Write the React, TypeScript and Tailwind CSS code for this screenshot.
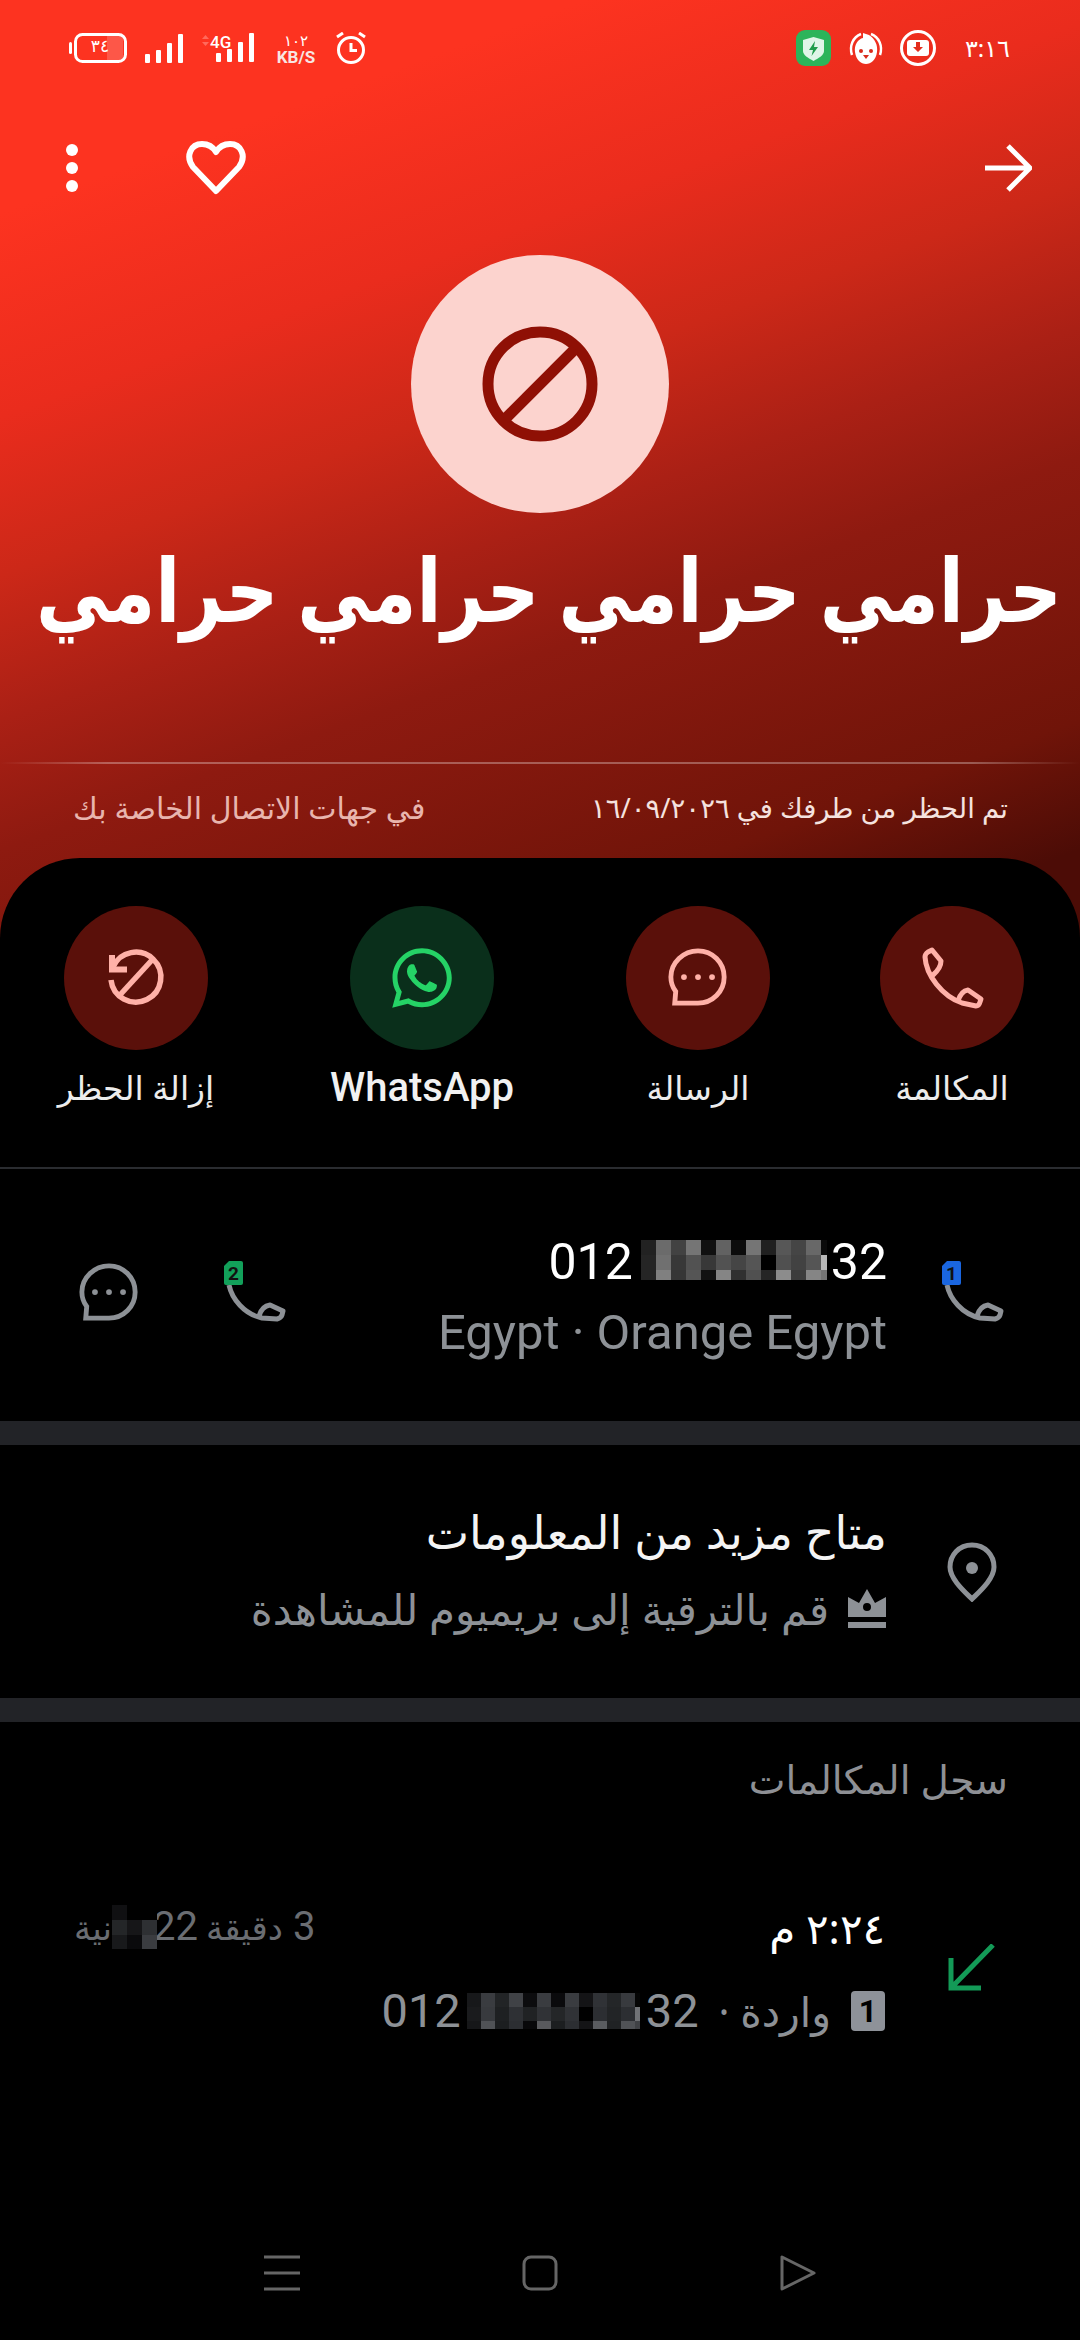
import { FaWhatsapp } from "react-icons/fa6";

const AR = "font-['Noto_Sans','DejaVu_Sans',sans-serif]";
const RB = "font-['Roboto',sans-serif]";

const numberCells = [
  ["#222", "#6b6b6b", "#424242", "#757575", "#101010", "#626262", "#0c0c0c", "#757575", "#202020", "#575757", "#454545", "#686868", "#0a0a0a"],
  ["#252525", "#707070", "#383838", "#525252", "#383838", "#525252", "#454545", "#555", "#000", "#505050", "#424242", "#555", "#b8b8b8"],
  ["#252525", "#808080", "#363636", "#555", "#121212", "#858585", "#303030", "#505050", "#252525", "#8c8c8c", "#3c3c3c", "#858585", "#757575"],
];

const logCells = [
  ["#17181a", "#3a3c40", "#222426", "#404246", "#0c0c0e", "#3a3c40", "#0a0a0c", "#3a3c40", "#141416", "#303236", "#242628", "#383a3e", "#050505"],
  ["#1a1b1d", "#383a3e", "#1e2022", "#2e3034", "#202224", "#303236", "#242628", "#303236", "#000", "#2c2e32", "#222426", "#2c2e32", "#707276"],
  ["#161719", "#505256", "#1c1e20", "#2c2e32", "#08080a", "#58595d", "#1c1e20", "#2c2e32", "#141416", "#5a5c60", "#202224", "#505256", "#404246"],
];

const durationCells = [
  ["#101012", "#000", "#000"],
  ["#242628", "#161618", "#2e3033"],
  ["#18191b", "#0a0a0c", "#3a3c40"],
];

// pixelated part of a blurred number, last column is narrower
const Mosaic = ({ cells, size, lastW, lastH, className = "" }: { cells: string[][]; size: number; lastW: number; lastH: number; className?: string }) => (
  <span dir="ltr" className={`inline-flex flex-col align-middle ${className}`}>
    {cells.map((row, r) => (
      <span key={r} className="flex">
        {row.map((c, i) => (
          <span
            key={i}
            style={{
              background: c,
              width: i === row.length - 1 ? lastW : size,
              height: r === cells.length - 1 ? lastH : size,
            }}
          />
        ))}
      </span>
    ))}
  </span>
);

const Phone = ({ className = "" }: { className?: string }) => (
  <svg viewBox="2 -2 100 100" className={className} fill="none" stroke="currentColor" strokeWidth="5" strokeLinejoin="round" strokeLinecap="round">
    <path d="M25 27C26 45 42 66 62 73L76 76Q79 76 80 72L81 69L68 60Q61 61 58 71M25 27Q25 24 28 22L32 20L41 31Q41 38 33 45" />
  </svg>
);

const SimPhone = ({ sim, color }: { sim: string; color: string }) => (
  <svg viewBox="20 20 64 64" className="h-[64px] w-[64px] text-[#8d9196]" fill="none" stroke="currentColor" strokeWidth="5" strokeLinejoin="round">
    <path d="M27 46C30 60 42 75 60 79L75 80Q79 79 80 76L81 72L68 66Q60 67 57 77" />
    <path d="M27 22H39Q41 22 41 24V44Q41 46 39 46H24Q22 46 22 44V27z" fill={color} stroke="none" />
    <text x="31.5" y="41" textAnchor="middle" fontSize="19" fontWeight="700" fontFamily="Roboto" fill="#111" stroke="none">{sim}</text>
  </svg>
);

const Chat = ({ className = "" }: { className?: string }) => (
  <svg viewBox="0 0 64 64" className={className} fill="none" stroke="currentColor" strokeWidth="5">
    <path d="M32 4C47 4 59 16 59 31C59 46 47 58 32 58H8L9 46C6 42 4 37 4 31C4 16 17 4 32 4z" />
    <circle cx="17.5" cy="31" r="3" fill="currentColor" stroke="none" />
    <circle cx="32" cy="31" r="3" fill="currentColor" stroke="none" />
    <circle cx="46.5" cy="31" r="3" fill="currentColor" stroke="none" />
  </svg>
);

const Unblock = ({ className = "" }: { className?: string }) => (
  <svg viewBox="6 -2 100 100" className={className} fill="none" stroke="currentColor" strokeWidth="5.5">
    <path d="M33 37A25 25 0 1 1 31 50" />
    <path d="M32 25V39.5H47" strokeWidth="6" />
    <path d="M72 30L39 66" />
  </svg>
);

const Signal = () => (
  <div className="flex h-[29px] items-end gap-[6px]">
    <span className="h-[9px] w-[5px] rounded-[1px] bg-white" />
    <span className="h-[13px] w-[5px] rounded-[1px] bg-white" />
    <span className="h-[20px] w-[5px] rounded-[1px] bg-white" />
    <span className="h-[29px] w-[5px] rounded-[1px] bg-white" />
  </div>
);

const StatusLeft = () => (
  <div dir="ltr" className="flex items-center text-white">
    <svg viewBox="0 0 58 30" className="h-[30px] w-[58px]">
      <rect x="0" y="9" width="3" height="12" rx="1.5" fill="#fff" />
      <rect x="38" y="3" width="16" height="24" fill="#fff" opacity="0.18" />
      <rect x="6.5" y="1.5" width="50" height="27" rx="7" fill="none" stroke="#fff" strokeWidth="3" />
      <text x="31" y="19" textAnchor="middle" fontSize="17" fill="#fff" fontFamily="DejaVu Sans">٣٤</text>
    </svg>
    <div className="ml-[18px]"><Signal /></div>
    <svg viewBox="0 0 56 30" className="ml-[15px] h-[30px] w-[56px]">
      <path d="M4 6L7.5 2L11 6zM4 9L7.5 13L11 9z" fill="#ff6a5c" />
      <text x="12" y="15" fontSize="17" fontWeight="500" fill="#fff" fontFamily="Roboto">4G</text>
      <rect x="18" y="20" width="5" height="9" rx="1" fill="#fff" />
      <rect x="29" y="16" width="5" height="13" rx="1" fill="#fff" />
      <rect x="40" y="9" width="5" height="20" rx="1" fill="#fff" />
      <rect x="51" y="0" width="5" height="29" rx="1" fill="#fff" />
    </svg>
    <div className="ml-[22px] flex w-[40px] flex-col items-center">
      <span className={`${AR} text-[15px] leading-[18px]`}>١٠٢</span>
      <span className={`${RB} text-[17px] font-bold leading-[16px] text-[#f8e6e3]`}>KB/S</span>
    </div>
    <svg viewBox="0 0 30 32" className="ml-[20px] h-[32px] w-[30px]" fill="none" stroke="#fff" strokeWidth="3">
      <circle cx="15" cy="18" r="12.5" />
      <path d="M15 11V18.5H21" />
      <path d="M1 5L7 1M29 5L23 1" />
    </svg>
  </div>
);

const StatusRight = () => (
  <div className="flex items-center text-white">
    <span className="text-[24px] leading-[30px]">٣:١٦</span>
    <svg viewBox="0 0 36 36" className="mr-[29px] h-[36px] w-[36px]">
      <circle cx="18" cy="18" r="16.5" fill="none" stroke="#fff" strokeWidth="3" />
      <rect x="7" y="10" width="22" height="16" rx="3" fill="#fff" />
      <path d="M16 12H20V17H23L18 22L13 17H16z" fill="#e32d1d" />
    </svg>
    <svg viewBox="0 0 36 36" className="mr-[16px] h-[36px] w-[36px]">
      <path d="M4 25C1 16 5 7 13 4M32 25C35 16 31 7 23 4" fill="none" stroke="#fff" strokeWidth="2.5" />
      <path d="M15 3L21 5C27 9 30 15 29 22C28 30 23 34 18 34C13 34 8 30 7 22C6 15 10 9 15 8z" fill="#fff" />
      <circle cx="13" cy="21" r="2" fill="#d92a1b" />
      <circle cx="23" cy="21" r="2" fill="#d92a1b" />
      <path d="M15 25H21L18 29z" fill="#d92a1b" />
    </svg>
    <svg viewBox="0 0 35 36" className="mr-[17px] h-[36px] w-[35px]">
      <rect width="35" height="36" rx="9" fill="#2cb45a" />
      <path d="M17.5 7L28 10V21C28 25 23 28 17.5 31C12 28 7 25 7 21V10z" fill="#dff5e7" />
      <path d="M19 11L13 20H17L15.5 26L22 17H18z" fill="#1f9c4a" />
    </svg>
  </div>
);

const Action = ({ label, bg, children, bold, className = "" }: { label: string; bg: string; children: any; bold?: boolean; className?: string }) => (
  <div className={`flex w-[200px] flex-col items-center ${className}`}>
    <div className={`flex h-[144px] w-[144px] items-center justify-center rounded-full ${bg}`}>{children}</div>
    <span className={`mt-[13px] whitespace-nowrap leading-[50px] ${bold ? `${RB} text-[40px] font-medium text-[#f1f1f1]` : `${AR} text-[33px] text-[#ececec]`}`}>{label}</span>
  </div>
);

export default function App() {
  return (
    <div dir="rtl" className={`flex h-[2340px] w-[1080px] flex-col overflow-hidden bg-[linear-gradient(160deg,#fd3320_0px,#fd3320_200px,#ea2c1d_391px,#cc2818_541px,#aa2015_677px,#8e1a10_799px,#701409_1046px,#4c0c06_1168px)] ${AR}`}>
      <div className="flex h-[96px] items-center justify-between pl-[69px] pr-[70px]">
        <StatusRight />
        <StatusLeft />
      </div>

      <div className="flex h-[144px] items-center justify-between pl-[66px] pr-[48px] text-white">
        <svg viewBox="0 0 48 48" className="h-[48px] w-[48px]" fill="none" stroke="currentColor" strokeWidth="5"><path d="M1 24H44M24 2L46 24L24 46" /></svg>
        <div dir="ltr" className="flex items-center gap-[108px]">
          <svg viewBox="0 0 12 48" className="h-[48px] w-[12px]" fill="currentColor"><circle cx="6" cy="6" r="6" /><circle cx="6" cy="24" r="6" /><circle cx="6" cy="42" r="6" /></svg>
          <svg viewBox="0 0 60 54" className="h-[54px] w-[60px]" fill="none" stroke="currentColor" strokeWidth="6" strokeLinejoin="round"><path d="M30 50L7 26C-1 15 5 3 16 3C22 3 27 6 30 11C33 6 38 3 44 3C55 3 61 15 53 26z" /></svg>
        </div>
      </div>

      <div className="mt-[15px] flex h-[258px] w-[258px] items-center justify-center self-center rounded-full bg-[#fcd3ce]">
        <svg viewBox="0 0 116 116" className="h-[116px] w-[116px]" fill="none" stroke="#8f1005" strokeWidth="11"><circle cx="58" cy="58" r="52" /><path d="M93 23L23 93" /></svg>
      </div>

      <div className="mt-[10px] flex h-[130px] justify-center pl-[18px]">
        <h1 className="shrink-0 scale-x-[0.83] whitespace-nowrap text-[88px] font-bold leading-[130px] text-white">حرامي حرامي حرامي حرامي</h1>
      </div>

      <div className="mt-[109px] h-[2px] bg-[linear-gradient(90deg,transparent,rgba(255,255,255,0.3)_10%,rgba(255,255,255,0.3)_90%,transparent)]" />
      <div className="flex h-[94px] items-start justify-between pl-[73px] pr-[72px] pt-[20px] text-[30px]">
        <span className="text-[27.5px] leading-[48px] text-[#f5e2df]">تم الحظر من طرفك في ١٦/٠٩/٢٠٢٦</span>
        <span className="leading-[48px] text-[#e8b5ae]">في جهات الاتصال الخاصة بك</span>
      </div>

      <div className="flex flex-1 flex-col rounded-t-[80px] bg-black">
        <div className="flex pr-[28px] pt-[48px]">
          <Action label="المكالمة" bg="bg-[#5a100a]"><Phone className="h-[100px] w-[100px] text-[#ffb1a8]" /></Action>
          <Action label="الرسالة" bg="bg-[#5a100a]" className="mr-[54px]"><Chat className="h-[62px] w-[62px] text-[#ffb1a8]" /></Action>
          <Action label="WhatsApp" bg="bg-[#0a2f1b]" bold className="mr-[76px]"><FaWhatsapp className="h-[68px] w-[68px] text-[#25d366]" /></Action>
          <Action label="إزالة الحظر" bg="bg-[#5a100a]" className="mr-[86px]"><Unblock className="h-[100px] w-[100px] text-[#ffb1a8]" /></Action>
        </div>

        <div className="mt-[54px] h-[2px] bg-[#2a2c30]" />

        <div className="flex h-[252px] items-start justify-between pl-[78px] pr-[76px] pt-[57px]">
          <div className="flex">
            <div className="mt-[33px]"><SimPhone sim="1" color="#1a66e0" /></div>
            <div className="mr-[53px] flex flex-col items-start">
              <div dir="ltr" className={`${RB} flex h-[72px] items-center text-[50px] text-white`}>
                012
                <Mosaic cells={numberCells} size={15} lastW={6} lastH={10} className="ml-[8px] mr-[4px] -mt-[4px]" />
                32
              </div>
              <div dir="ltr" className={`${RB} mt-[5px] text-[49px] leading-[60px] text-[#8d9196]`}>Egypt · Orange Egypt</div>
            </div>
          </div>
          <div dir="ltr" className="mt-[33px] flex items-start gap-[82px] text-[#8d9196]">
            <Chat className="mt-[3px] h-[62px] w-[62px]" />
            <SimPhone sim="2" color="#12a05a" />
          </div>
        </div>

        <div className="h-[24px] bg-[#222327]" />

        <div className="flex h-[253px] items-center pr-[83px]">
          <svg viewBox="0 0 50 60" className="h-[60px] w-[50px] text-[#8d9196]" fill="none" stroke="currentColor" strokeWidth="5">
            <path d="M25 3C12 3 3 13 3 25C3 37 18 50 25 57C32 50 47 37 47 25C47 13 38 3 25 3z" />
            <circle cx="25" cy="26" r="6" fill="currentColor" stroke="none" />
          </svg>
          <div className="mr-[60px] flex flex-col items-start gap-[22px] pb-[4px]">
            <span className="text-[46px] leading-[56px] text-[#f4f4f4]">متاح مزيد من المعلومات</span>
            <div className="flex items-center gap-[18px] text-[42px] leading-[56px] text-[#8d9196]">
              <svg viewBox="0 0 40 40" className="h-[40px] w-[40px]" fill="currentColor">
                <path fillRule="evenodd" d="M20 0L28 14L39 8V28H1V8L12 14zM20 14A4 4 0 1 0 20 22A4 4 0 1 0 20 14z" />
                <rect x="1" y="33" width="38" height="6" />
              </svg>
              <span>قم بالترقية إلى بريميوم للمشاهدة</span>
            </div>
          </div>
        </div>

        <div className="h-[24px] bg-[#222327]" />

        <div className="flex h-[114px] items-center pr-[72px] text-[39px] text-[#8e9095]">سجل المكالمات</div>

        <div className="flex items-start pl-[74px] pr-[85px] pt-[63px]">
          <svg viewBox="0 0 48 48" className="mt-[45px] h-[48px] w-[48px] text-[#139a57]" fill="none" stroke="currentColor" strokeWidth="5"><path d="M46 1L4 44M4 14V44H34" /></svg>
          <div className="mr-[62px] flex flex-1 flex-col">
            <div className="flex h-[56px] items-center justify-between">
              <span className="text-[42px] text-white">٢:٢٤ م</span>
              <span className="flex items-center text-[34px] text-[#6a6d72]">
                <span className={`${RB} ml-[10px] text-[40px]`}>3</span>
                دقيقة <span className={`${RB} mr-[8px] text-[40px]`}>22</span>
                <Mosaic cells={durationCells} size={15} lastW={15} lastH={14} className="-mr-[4px]" />
                نية
              </span>
            </div>
            <div className="mt-[31px] flex items-center">
              <div className={`${RB} flex h-[40px] w-[34px] items-center justify-center rounded-[4px] bg-[#8e9299] text-[32px] font-bold text-black`}>1</div>
              <span className="mr-[20px] text-[41px] leading-[50px] text-[#8d9196]">واردة ·</span>
              <div dir="ltr" className={`${RB} mr-[20px] flex items-center text-[47px] leading-[50px] text-[#8d9196]`}>
                012
                <Mosaic cells={logCells} size={14} lastW={5} lastH={8} className="mx-[6px]" />
                32
              </div>
            </div>
          </div>
        </div>

        <div dir="ltr" className="mt-auto flex h-[134px] items-center justify-center gap-[222px] text-[#666]">
          <svg viewBox="0 0 36 36" className="h-[36px] w-[36px]" fill="none" stroke="currentColor" strokeWidth="3"><path d="M0 2H36M0 18H36M0 34H36" /></svg>
          <svg viewBox="0 0 36 36" className="h-[36px] w-[36px]" fill="none" stroke="currentColor" strokeWidth="3"><rect x="2" y="2" width="32" height="32" rx="7" /></svg>
          <svg viewBox="0 0 36 36" className="h-[36px] w-[36px]" fill="none" stroke="currentColor" strokeWidth="3" strokeLinejoin="round"><path d="M2 2V34L34 18z" /></svg>
        </div>
      </div>
    </div>
  );
}
